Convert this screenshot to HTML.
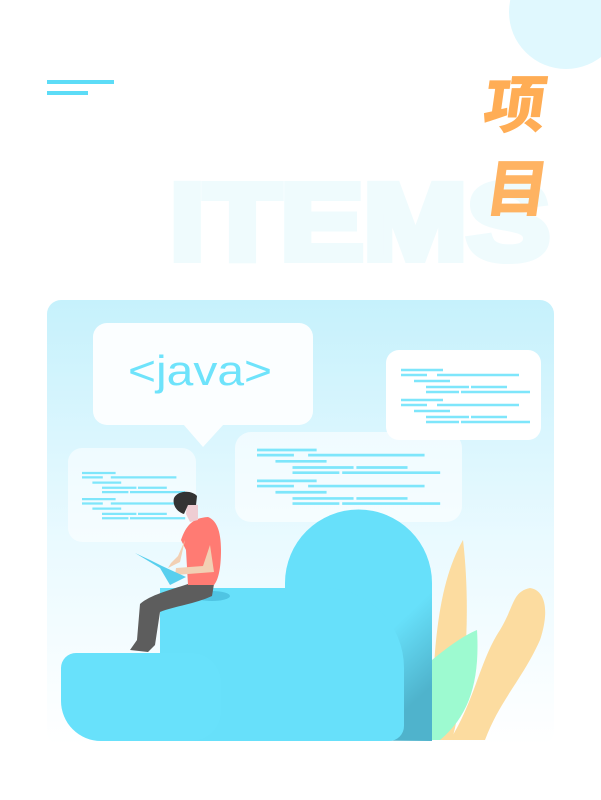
<!DOCTYPE html>
<html><head><meta charset="utf-8"><style>
html,body{margin:0;padding:0;background:#fff;width:601px;height:800px;overflow:hidden}
svg{display:block}
</style></head><body>
<svg width="601" height="800" viewBox="0 0 601 800" xmlns="http://www.w3.org/2000/svg">
<defs>
<linearGradient id="bg" x1="0" y1="0" x2="0" y2="1">
<stop offset="0" stop-color="#c6f1fc"/><stop offset="0.55" stop-color="#eafaff"/><stop offset="1" stop-color="#ffffff"/>
</linearGradient>
<linearGradient id="sh" x1="0" y1="0" x2="0.6" y2="1">
<stop offset="0" stop-color="#67e0fa"/><stop offset="0.7" stop-color="#67e0fa"/><stop offset="1" stop-color="#4fb3cc"/>
</linearGradient>
<g id="code" stroke="#7ee6fb" stroke-width="2.6">
<path d="M0 0H42M0 5H26M36 5H118M13 11H49M25 17H68M70 17H106M25 22H58M60 22H129"/>
<path d="M0 30H42M0 35H26M36 35H118M13 41H49M25 47H68M70 47H106M25 52H58M60 52H129"/>
</g>
</defs>
<circle cx="566" cy="12" r="57" fill="#e0f8fe"/>
<rect x="47" y="80" width="67" height="4" fill="#5cdcf7"/>
<rect x="47" y="91" width="41" height="4" fill="#5cdcf7"/>
<text x="170" y="259" font-family="Liberation Sans, sans-serif" font-weight="bold" font-size="108" fill="#effbfd" stroke="#effbfd" stroke-width="8" stroke-linejoin="miter" textLength="380" lengthAdjust="spacingAndGlyphs">ITEMS</text>
<text x="482" y="127" font-family="Liberation Sans, 'Noto Sans CJK SC', sans-serif" font-weight="900" font-size="62" fill="#ffad55" transform="skewX(-8) translate(17,0)">项</text>
<text x="484" y="211" font-family="Liberation Sans, 'Noto Sans CJK SC', sans-serif" font-weight="900" font-size="62" fill="#ffad55" fill-opacity="0.92" transform="skewX(-8) translate(29,0)">目</text>
<rect x="47" y="300" width="507" height="445" rx="14" fill="url(#bg)"/>
<rect x="93" y="323" width="220" height="102" rx="14" fill="#fbfeff"/>
<path d="M183 424L203 447L224 424Z" fill="#fbfeff"/>
<text x="200" y="385" text-anchor="middle" font-family="Liberation Sans, sans-serif" font-size="42" fill="#6ee3fb" textLength="144" lengthAdjust="spacingAndGlyphs">&lt;java&gt;</text>
<rect x="386" y="350" width="155" height="90" rx="13" fill="#fff"/>
<use href="#code" transform="translate(401,370)"/>
<rect x="68" y="448" width="128" height="94" rx="14" fill="#fff" fill-opacity="0.55"/>
<use href="#code" transform="translate(82,473) scale(0.8,0.87)"/>
<rect x="235" y="432" width="227" height="90" rx="16" fill="#fff" fill-opacity="0.6"/>
<use href="#code" transform="translate(257,450) scale(1.42,1.03)"/>
<!-- leaves -->
<path d="M432 740C432 640 440 580 463 540C470 600 468 680 452 740Z" fill="#fcdca0"/>
<path d="M450 740C475 700 480 660 500 630C515 605 512 592 530 588C545 590 550 610 540 640C522 680 500 700 485 740Z" fill="#fcdca0"/>
<path d="M432 740V660C450 645 465 635 477 630C480 680 470 715 440 740Z" fill="#9dfad0"/>
<!-- shapes -->
<path d="M285 740V583A73.5 73.5 0 0 1 432 583V741Z" fill="url(#sh)"/>
<path d="M160 741V588H324A80 80 0 0 1 404 668V726A15 15 0 0 1 389 741Z" fill="#67e0fa"/>
<path d="M76 653H191A30 30 0 0 1 221 683V711A30 30 0 0 1 191 741H101A40 40 0 0 1 61 701V668A15 15 0 0 1 76 653Z" fill="#68e1fb"/>
<!-- person -->
<ellipse cx="212" cy="596" rx="18" ry="5" fill="#4fc4e3"/>
<path d="M215 578L212 596C195 604 175 606 160 612L155 645L148 652L130 650L137 640L140 604C150 595 170 590 188 584Z" fill="#5d5d5d"/>
<path d="M208 517C216 520 221 530 221 550C221 570 218 580 214 585L188 585L186 550L181 540C186 526 192 518 208 517Z" fill="#ff7b73"/>
<path d="M210 545L214 572L175 575L176 568L203 566Z" fill="#f2d0b4"/>
<path d="M185 540L180 562L168 568L171 563L178 556Z" fill="#f2d0b4"/>
<path d="M135 553L160 568L170 585L186 577L162 566L150 560Z" fill="#58cfee"/>
<path d="M187 503L198 505L198 520L190 522L186 514Z" fill="#eecdd3"/>
<path d="M174 498C178 490 192 490 197 496L196 505L188 505L184 514C177 512 172 505 174 498Z" fill="#333"/>
</svg>
</body></html>
